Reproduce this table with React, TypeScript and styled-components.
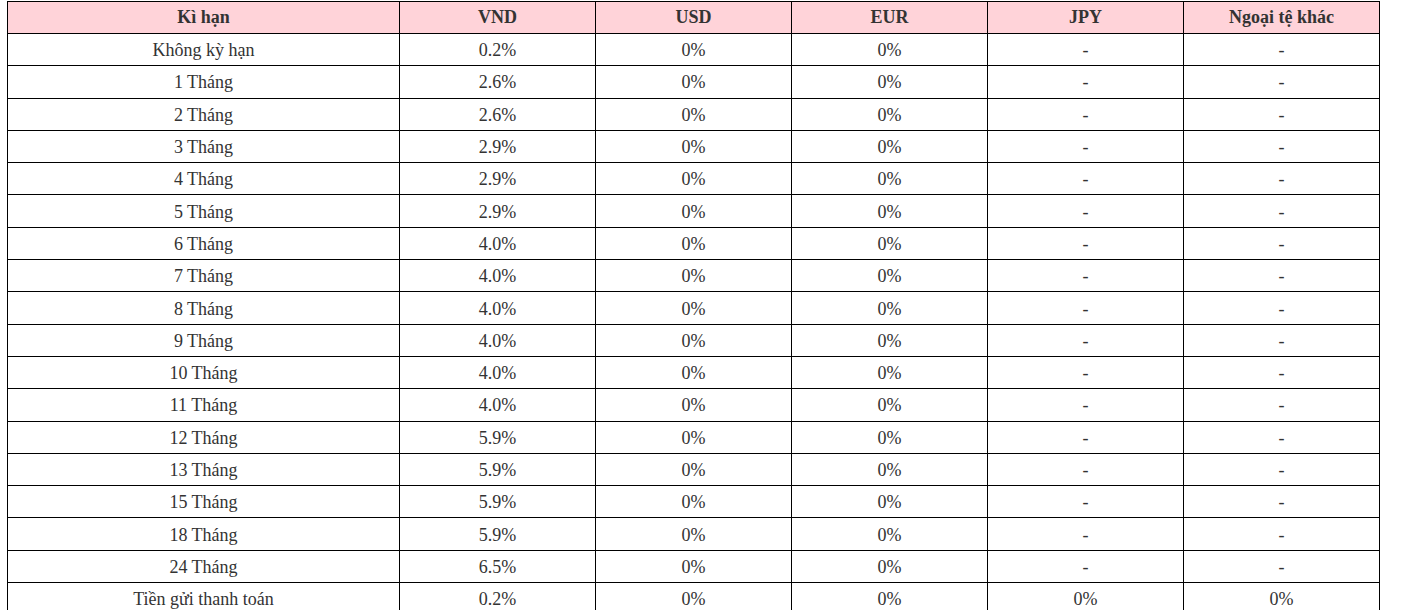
import React from 'react'
import styled, {createGlobalStyle} from 'styled-components'

const GlobalStyle = createGlobalStyle`
  body {
    margin: 0;
    background: #fff;
    font-family: "Liberation Serif", "Times New Roman", serif;
    color: #333;
  }
`

const Page = styled.div`
  padding: 1px 0 0 7px;
`

const RateTable = styled.table`
  width: 1372px;
  border-collapse: collapse;
  table-layout: fixed;
  font-size: 18px;
`

const Col = styled.col<{wide?: boolean}>`
  width: ${props => props.wide ? 392 : 196}px;
`

const HeadCell = styled.th`
  background: #ffd3d9;
  border: 1px solid #000;
  font-weight: bold;
  text-align: center;
  padding: 0;
  height: 31px;
`

const Cell = styled.td`
  border: 1px solid #000;
  text-align: center;
  padding: 2px 0 0;
  height: 29.3px;
`

const columns = ['Kì hạn', 'VND', 'USD', 'EUR', 'JPY', 'Ngoại tệ khác']

const rows: string[][] = [
  ['Không kỳ hạn', '0.2%', '0%', '0%', '-', '-'],
  ['1 Tháng', '2.6%', '0%', '0%', '-', '-'],
  ['2 Tháng', '2.6%', '0%', '0%', '-', '-'],
  ['3 Tháng', '2.9%', '0%', '0%', '-', '-'],
  ['4 Tháng', '2.9%', '0%', '0%', '-', '-'],
  ['5 Tháng', '2.9%', '0%', '0%', '-', '-'],
  ['6 Tháng', '4.0%', '0%', '0%', '-', '-'],
  ['7 Tháng', '4.0%', '0%', '0%', '-', '-'],
  ['8 Tháng', '4.0%', '0%', '0%', '-', '-'],
  ['9 Tháng', '4.0%', '0%', '0%', '-', '-'],
  ['10 Tháng', '4.0%', '0%', '0%', '-', '-'],
  ['11 Tháng', '4.0%', '0%', '0%', '-', '-'],
  ['12 Tháng', '5.9%', '0%', '0%', '-', '-'],
  ['13 Tháng', '5.9%', '0%', '0%', '-', '-'],
  ['15 Tháng', '5.9%', '0%', '0%', '-', '-'],
  ['18 Tháng', '5.9%', '0%', '0%', '-', '-'],
  ['24 Tháng', '6.5%', '0%', '0%', '-', '-'],
  ['Tiền gửi thanh toán', '0.2%', '0%', '0%', '0%', '0%'],
]

const App = () => {
  return (
    <Page>
      <GlobalStyle />
      <RateTable>
        <colgroup>
          <Col wide />
          <Col />
          <Col />
          <Col />
          <Col />
          <Col />
        </colgroup>
        <thead>
          <tr>
            {columns.map(c => <HeadCell key={c}>{c}</HeadCell>)}
          </tr>
        </thead>
        <tbody>
          {rows.map(r => (
            <tr key={r[0]}>
              {r.map((v, i) => <Cell key={i}>{v}</Cell>)}
            </tr>
          ))}
        </tbody>
      </RateTable>
    </Page>
  )
}

export default App
